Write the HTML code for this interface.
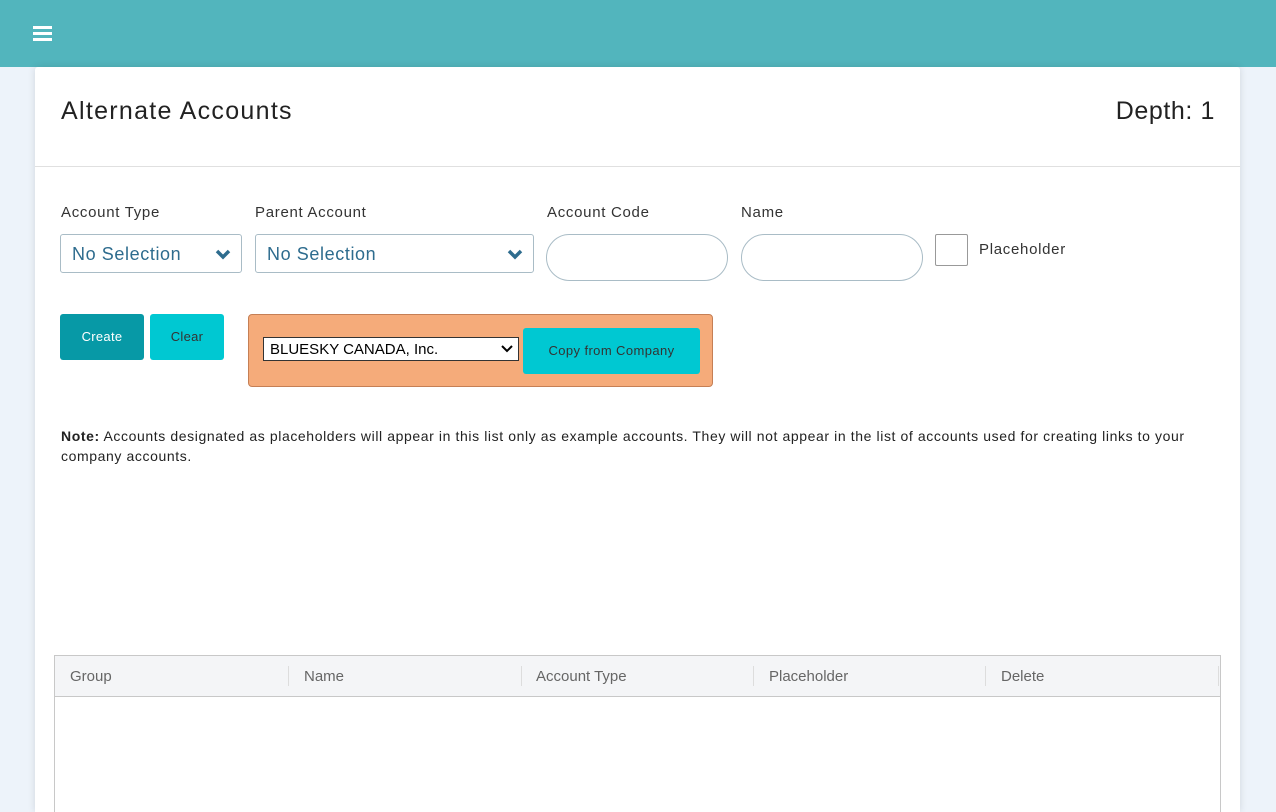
<!DOCTYPE html>
<html><head><meta charset="utf-8"><style>
*{box-sizing:border-box;margin:0;padding:0}
html,body{width:1276px;height:812px;overflow:hidden}
body{background:#edf3fa;font-family:"Liberation Sans",sans-serif;position:relative}
.top{position:absolute;left:0;top:0;width:1276px;height:67px;background:#52b5bd}
.ham{position:absolute;left:33px;top:26px;width:19px}
.ham i{display:block;height:3px;background:#fff;margin-bottom:3px}
.card{position:absolute;left:35px;top:67px;width:1205px;height:745px;background:#fff;box-shadow:0 0 8px rgba(0,0,0,.12);border-radius:3px 3px 0 0;overflow:hidden}
h1{position:absolute;left:26px;top:30px;font-size:25px;font-weight:normal;color:#222;letter-spacing:1.3px}
.depth{position:absolute;right:25px;top:30px;font-size:25px;color:#222;letter-spacing:0.6px}
.hr{position:absolute;left:0;right:0;top:99px;border-top:1px solid #e0e0e0}
.lbl{position:absolute;top:137px;font-size:15px;color:#333;letter-spacing:0.7px}
.sel{position:absolute;top:167px;height:39px;border:1px solid #a9bcc6;border-radius:3px;font-size:18px;color:#2e6c8e;padding:9px 11px;letter-spacing:0.6px}
.sel svg{position:absolute;right:10px;top:14px}
.inp{position:absolute;top:167px;height:47px;border:1px solid #a9bcc6;border-radius:24px;width:182px}
.cb{position:absolute;left:900px;top:167px;width:33px;height:32px;border:1px solid #999;border-radius:2px}
.btn{position:absolute;top:247px;height:46px;border-radius:3px;font-size:13px;text-align:center;line-height:46px;letter-spacing:0.3px}
.org{position:absolute;left:213px;top:247px;width:465px;height:73px;background:#f5ab7a;border:1px solid #c57f55;border-radius:4px}
.ds{position:absolute;left:14px;top:22px;width:256px;height:24px;background:#fff;border:1px solid #333;font-size:15px;padding:3px 6px;color:#000}
.ds svg{position:absolute;right:5px;top:7px}
.cp{position:absolute;left:274px;top:13px;width:177px;height:46px;background:#00c8d2;border-radius:3px;font-size:13px;line-height:46px;text-align:center;color:#333;letter-spacing:0.4px}
.note{position:absolute;left:26px;top:359px;width:1170px;font-size:14px;line-height:20px;color:#222;letter-spacing:0.6px;white-space:nowrap}
.tbl{position:absolute;left:19px;top:588px;width:1167px;height:157px;border:1px solid #c8c8c8;border-bottom:none}
.th{height:41px;background:#f4f5f7;border-bottom:1px solid #c8c8c8;position:relative}
.th span{position:absolute;top:12px;font-size:15px;color:#666}
.th b{position:absolute;top:10px;height:20px;border-left:1px solid #ddd}
</style></head><body>
<div class="top"><div class="ham"><i></i><i></i><i></i></div></div>
<div class="card">
<h1>Alternate Accounts</h1><div class="depth">Depth: 1</div>
<div class="hr"></div>
<div class="lbl" style="left:26px">Account Type</div>
<div class="lbl" style="left:220px">Parent Account</div>
<div class="lbl" style="left:512px">Account Code</div>
<div class="lbl" style="left:706px">Name</div>
<div class="sel" style="left:25px;width:182px">No Selection<svg width="16" height="11" viewBox="0 0 16 11"><path d="M2 2l6 6 6-6" fill="none" stroke="#2e6c8e" stroke-width="3.5"/></svg></div>
<div class="sel" style="left:220px;width:279px">No Selection<svg width="16" height="11" viewBox="0 0 16 11"><path d="M2 2l6 6 6-6" fill="none" stroke="#2e6c8e" stroke-width="3.5"/></svg></div>
<div class="inp" style="left:511px"></div>
<div class="inp" style="left:706px"></div>
<div class="cb"></div>
<div class="lbl" style="left:944px;top:174px">Placeholder</div>
<div class="btn" style="left:25px;width:84px;background:#0799a6;color:#fff">Create</div>
<div class="btn" style="left:115px;width:74px;background:#00c8d2;color:#333">Clear</div>
<div class="org"><div class="ds">BLUESKY CANADA, Inc.<svg width="12" height="8" viewBox="0 0 12 8"><path d="M1 1l5 5 5-5" fill="none" stroke="#000" stroke-width="2"/></svg></div><div class="cp">Copy from Company</div></div>
<div class="note"><b>Note:</b> Accounts designated as placeholders will appear in this list only as example accounts. They will not appear in the list of accounts used for creating links to your<br>company accounts.</div>
<div class="tbl"><div class="th">
<span style="left:15px">Group</span><b style="left:233px"></b>
<span style="left:249px">Name</span><b style="left:466px"></b>
<span style="left:481px">Account Type</span><b style="left:698px"></b>
<span style="left:714px">Placeholder</span><b style="left:930px"></b>
<span style="left:946px">Delete</span><b style="left:1163px"></b>
</div></div>
</div>
</body></html>
